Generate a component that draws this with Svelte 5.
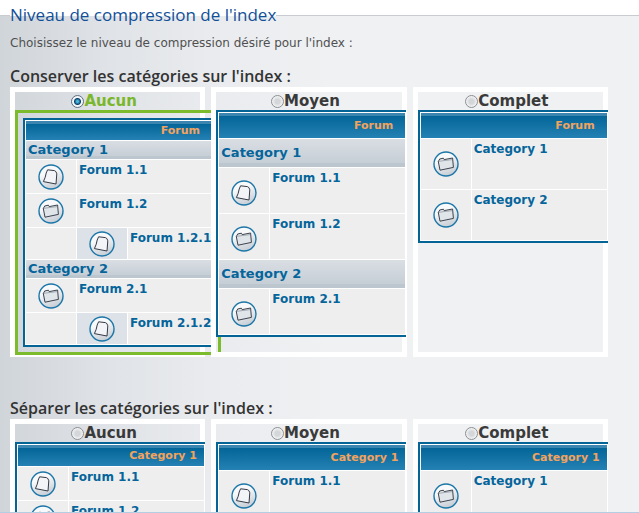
<script>
  const doc = 'doc';
  const folder = 'folder';

  const groups = [
    {
      id: 'keep',
      title: "Conserver les catégories sur l'index :",
      options: [
        {
          label: 'Aucun',
          size: 'compact',
          head: 'Forum',
          rows: [
            { type: 'cat', text: 'Category 1' },
            { type: 'item', icon: doc, text: 'Forum 1.1' },
            { type: 'item', icon: folder, text: 'Forum 1.2' },
            { type: 'sub', icon: doc, text: 'Forum 1.2.1' },
            { type: 'cat', text: 'Category 2' },
            { type: 'item', icon: folder, text: 'Forum 2.1' },
            { type: 'sub', icon: doc, text: 'Forum 2.1.2' }
          ]
        },
        {
          label: 'Moyen',
          size: 'medium',
          head: 'Forum',
          rows: [
            { type: 'cat', text: 'Category 1' },
            { type: 'item', icon: doc, text: 'Forum 1.1' },
            { type: 'item', icon: folder, text: 'Forum 1.2' },
            { type: 'cat', text: 'Category 2' },
            { type: 'item', icon: folder, text: 'Forum 2.1' }
          ]
        },
        {
          label: 'Complet',
          size: 'large',
          head: 'Forum',
          rows: [
            { type: 'item', icon: folder, text: 'Category 1' },
            { type: 'item', icon: folder, text: 'Category 2' }
          ]
        }
      ]
    },
    {
      id: 'split',
      title: "Séparer les catégories sur l'index :",
      options: [
        {
          label: 'Aucun',
          size: 'compact',
          head: 'Category 1',
          rows: [
            { type: 'item', icon: doc, text: 'Forum 1.1' },
            { type: 'item', icon: folder, text: 'Forum 1.2' }
          ]
        },
        {
          label: 'Moyen',
          size: 'large',
          head: 'Category 1',
          rows: [{ type: 'item', icon: doc, text: 'Forum 1.1' }]
        },
        {
          label: 'Complet',
          size: 'large',
          head: 'Category 1',
          rows: [{ type: 'item', icon: folder, text: 'Category 1' }]
        }
      ]
    }
  ];

  let chosen = $state({ keep: 'Aucun', split: '' });
</script>

{#snippet badge(kind)}
  <svg class="badge" viewBox="0 0 26 26" aria-hidden="true">
    <defs>
      <linearGradient id="disc" x1="0.3" y1="0" x2="0.7" y2="1">
        <stop offset="0.3" stop-color="#f8f9fa" />
        <stop offset="1" stop-color="#c3cad2" />
      </linearGradient>
    </defs>
    <circle cx="13" cy="13" r="12" fill="url(#disc)" stroke="#1c76a8" stroke-width="1.4" />
    {#if kind === 'doc'}
      <path d="M9.6 5.8 L16.4 6.6 Q18.2 7 18.8 9.8 L18 20 L5.4 17.6 Q7.6 13.4 8.2 9 Z" fill="#f3f4f7" stroke="#343a46" stroke-width="1" stroke-linejoin="round" />
    {:else}
      <path d="M6.2 9.4 L6.6 8 L10.4 7.2 L11.2 8.6 L19.6 7 L20.4 16.4 L7 19.2 L5.2 10 Z" fill="#e0e5ea" stroke="#3d434e" stroke-width="1" stroke-linejoin="round" />
      <path d="M5.6 10.4 L11 9.6 L19.4 8.6" fill="none" stroke="#7a818c" stroke-width="0.6" />
    {/if}
  </svg>
{/snippet}

<main>
  <fieldset>
    <legend>Niveau de compression de l'index</legend>
    <p>Choisissez le niveau de compression désiré pour l'index :</p>

    {#each groups as group (group.id)}
      <section>
        <h2>{group.title}</h2>
        <div class="cards">
          {#each group.options as option (option.label)}
            <div class="card" class:selected={chosen[group.id] === option.label}>
              <label>
                <input type="radio" name={group.id} value={option.label} bind:group={chosen[group.id]} />
                <span>{option.label}</span>
              </label>
              <div class="preview">
                <table class={option.size} class:split={group.id === 'split'}>
                  <colgroup><col class="narrow" /><col class="narrow" /><col /></colgroup>
                  <thead>
                    <tr><th colspan="3">{option.head}</th></tr>
                  </thead>
                  <tbody>
                    {#each option.rows as row (row.text)}
                      <tr class={row.type}>
                        {#if row.type === 'cat'}
                          <td colspan="3">{row.text}</td>
                        {:else if row.type === 'item'}
                          <td class="icon">{@render badge(row.icon)}</td>
                          <td class="name" colspan="2">{row.text}</td>
                        {:else}
                          <td></td>
                          <td class="icon">{@render badge(row.icon)}</td>
                          <td class="name">{row.text}</td>
                        {/if}
                      </tr>
                    {/each}
                  </tbody>
                </table>
              </div>
            </div>
          {/each}
        </div>
      </section>
    {/each}
  </fieldset>
</main>

<style>
  :global(body) {
    background: #fff;
  }

  main {
    box-sizing: border-box;
    height: 100vh;
    overflow: hidden;
    padding-top: 5px;
    border-bottom: 1px solid #b4cde3;
    font-family: Verdana, 'DejaVu Sans', sans-serif;
    color: #3a3a3a;
  }

  fieldset {
    min-width: 0;
    margin: 0;
    padding: 0 31px 60px 10px;
    border: 0;
    border-top: 1px solid #c8ccd0;
    background: linear-gradient(to right, #d0d5da 0, #e0e3e7 110px, #e9ebee 210px, #eff1f3 330px);
  }

  legend {
    padding: 0;
    font: 500 17px/20px 'Trebuchet MS', 'Open Sans', sans-serif;
    color: #115098;
  }

  p {
    margin: 9px 0 0;
    font-size: 12px;
    line-height: 18px;
    color: #505050;
  }

  section {
    padding-top: 14px;
  }

  section + section {
    padding-top: 41px;
  }

  h2 {
    margin: 0;
    font: 600 16px/21px 'Trebuchet MS', 'Open Sans', sans-serif;
    color: #333;
  }

  .cards {
    display: grid;
    grid-template-columns: repeat(3, minmax(0, 1fr));
    gap: 6px;
  }

  .card {
    position: relative;
    min-width: 0;
    border: 5px solid #fff;
  }

  label {
    display: flex;
    justify-content: center;
    align-items: center;
    height: 18px;
    padding-right: 7px;
    font-size: 15px;
    font-weight: bold;
  }

  .selected label {
    color: #7ab72c;
  }

  input {
    appearance: none;
    box-sizing: border-box;
    width: 13px;
    height: 13px;
    margin: 0;
    border: 1px solid #8b8f94;
    border-radius: 50%;
    background: radial-gradient(circle, #d4d7da 0 30%, #f4f4f4 70%);
  }

  input:checked {
    border-color: #5b6f80;
    background: radial-gradient(circle, #49b4dc 0 1px, #0c3f6b 3px, #f4f7f9 4px);
  }

  .preview {
    width: 190px;
  }

  .selected .preview {
    margin-bottom: -3px;
    padding: 5px;
    border: 3px solid #7cbb2b;
  }

  table {
    --head: 25px;
    --cat: 28px;
    --row: 45px;
    --sub: 31px;
    width: 190px;
    table-layout: fixed;
    border: 2px solid #036495;
    border-right: 0;
    border-spacing: 1px;
    background: #fff;
    font-size: 12px;
    font-weight: bold;
    color: #05659b;
  }

  .compact {
    --head: 19px;
    --cat: 18px;
    --row: 33px;
  }

  .compact.split {
    --head: 21px;
  }

  .large {
    --row: 50px;
  }

  .narrow {
    width: 50px;
  }

  th,
  td {
    box-sizing: border-box;
    padding: 0;
    background: #eee;
    white-space: nowrap;
  }

  th {
    height: var(--head);
    padding-right: 12px;
    background: linear-gradient(#3a86b0 0 3px, #036598 3px, #2581b3);
    font-size: 11px;
    line-height: 16px;
    text-align: right;
    color: #f2a35e;
  }

  .split th {
    padding-right: 7px;
  }

  .cat td {
    height: var(--cat);
    padding-left: 2px;
    background: linear-gradient(#d9dee3, #c6ced6 85%, #bcc6cf 85%);
    font-size: 13px;
    line-height: 16px;
  }

  .item td {
    height: var(--row);
  }

  .sub td {
    height: var(--sub);
  }

  .sub .icon {
    background: #dce2e7;
  }

  .icon {
    text-align: center;
  }

  .medium .icon {
    padding-top: 4px;
  }

  .badge {
    display: block;
    width: 26px;
    height: 26px;
    margin: 0 auto;
  }

  .name {
    padding: 1px 0 0 2px;
    line-height: 18px;
    vertical-align: top;
  }
</style>
